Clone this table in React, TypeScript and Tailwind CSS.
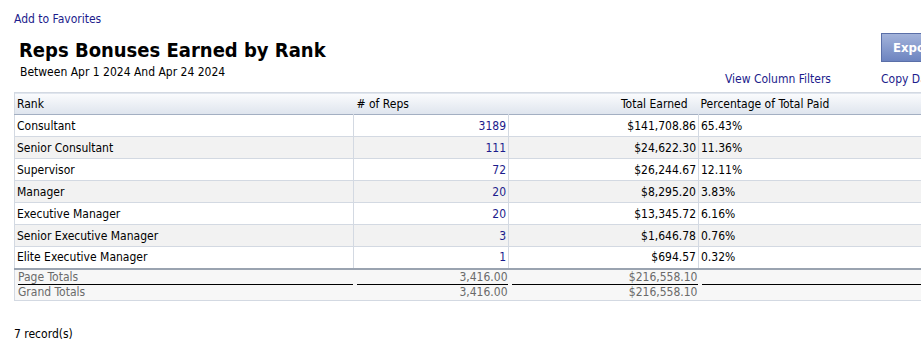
import React from "react";

const rows = [
  { rank: "Consultant", reps: "3189", total: "$141,708.86", pct: "65.43%" },
  { rank: "Senior Consultant", reps: "111", total: "$24,622.30", pct: "11.36%" },
  { rank: "Supervisor", reps: "72", total: "$26,244.67", pct: "12.11%" },
  { rank: "Manager", reps: "20", total: "$8,295.20", pct: "3.83%" },
  { rank: "Executive Manager", reps: "20", total: "$13,345.72", pct: "6.16%" },
  { rank: "Senior Executive Manager", reps: "3", total: "$1,646.78", pct: "0.76%" },
  { rank: "Elite Executive Manager", reps: "1", total: "$694.57", pct: "0.32%" },
];

const font = { fontFamily: '"DejaVu Sans Condensed", "DejaVu Sans", Tahoma, sans-serif' };

export default function App() {
  return (
    <div className="w-[921px] h-[345px] overflow-hidden bg-white text-black" style={font}>
      <div className="pl-[14px] pt-[12px] text-[12px] leading-[14px] text-[#1c1c8c]">Add to Favorites</div>

      <div className="flex items-start mt-[11px]">
        <div className="pl-[19px]">
          <h1 className="text-[20px] font-bold leading-[24px] pt-px">Reps Bonuses Earned by Rank</h1>
          <div className="pl-px text-[12px] leading-[14px] mt-[3px]">Between Apr 1 2024 And Apr 24 2024</div>
        </div>
        <div className="ml-auto flex flex-col items-end">
          <div className="w-[40px] h-[29px] mt-[-4px] border border-[#5a6fa8] border-r-0 bg-gradient-to-b from-[#a3b3da] to-[#6d84c0] text-white font-bold text-[13px] leading-[27px] pl-[11px] overflow-hidden whitespace-nowrap">
            Export
          </div>
          <div className="flex mt-[10px] text-[12px] leading-[14px] text-[#1c1c8c] whitespace-nowrap">
            <span className="mr-[50px]">View Column Filters</span>
            <span className="w-[40px] overflow-hidden">Copy Data</span>
          </div>
        </div>
      </div>

      <table className="ml-[14px] mt-[6px] w-[1000px] border-collapse text-[12px] leading-[14px] table-fixed">
        <colgroup>
          <col className="w-[339px]" />
          <col className="w-[155px]" />
          <col className="w-[190px]" />
          <col />
        </colgroup>
        <thead>
          <tr className="h-[22px] bg-gradient-to-b from-[#fafbfd] to-[#dfe5ee] border-t border-[#d3d9e2] border-b border-b-[#a3afc2] border-l border-l-[#d3d9e2]">
            <th className="text-left font-normal px-[2px]">Rank</th>
            <th className="text-left font-normal pl-[3px]"># of Reps</th>
            <th className="text-right font-normal pr-[11px]">Total Earned</th>
            <th className="text-left font-normal px-[2px]">Percentage of Total Paid</th>
          </tr>
        </thead>
        <tbody>
          {rows.map((r, i) => (
            <tr
              key={r.rank}
              className={`h-[22px] border-b border-[#d3d9e2] border-l border-l-[#d3d9e2] ${i % 2 === 1 ? "bg-[#f2f2f2]" : "bg-white"}`}
            >
              <td className="px-[2px] border-r border-[#d3d9e2]">{r.rank}</td>
              <td className="px-[2px] text-right text-[#1c1c8c] border-r border-[#d3d9e2]">{r.reps}</td>
              <td className="px-[2px] text-right border-r border-[#d3d9e2]">{r.total}</td>
              <td className="px-[2px]">{r.pct}</td>
            </tr>
          ))}
          <tr className="bg-[#f7f7f7] text-[#6a6a6a] border-t-2 border-t-[#9aa3b0] border-l border-l-[#d3d9e2]">
            <td className="pl-[3px] pr-px">
              <div className="border-b border-black leading-[14px]">Page Totals</div>
            </td>
            <td className="pl-[3px] pr-px">
              <div className="border-b border-black text-right leading-[14px]">3,416.00</div>
            </td>
            <td className="pl-[3px] pr-px">
              <div className="border-b border-black text-right leading-[14px]">$216,558.10</div>
            </td>
            <td className="pl-[3px] pr-px">
              <div className="border-b border-black leading-[14px]">&nbsp;</div>
            </td>
          </tr>
          <tr className="bg-[#f7f7f7] text-[#6a6a6a] border-b border-[#d3d9e2] border-l border-l-[#d3d9e2]">
            <td className="pl-[3px] pr-px leading-[15px]">Grand Totals</td>
            <td className="pl-[3px] pr-px text-right leading-[15px]">3,416.00</td>
            <td className="pl-[3px] pr-px text-right leading-[15px]">$216,558.10</td>
            <td className="pl-[3px] pr-px leading-[15px]">&nbsp;</td>
          </tr>
        </tbody>
      </table>

      <div className="pl-[14px] mt-[26px] text-[12px] leading-[14px]">7 record(s)</div>
    </div>
  );
}
